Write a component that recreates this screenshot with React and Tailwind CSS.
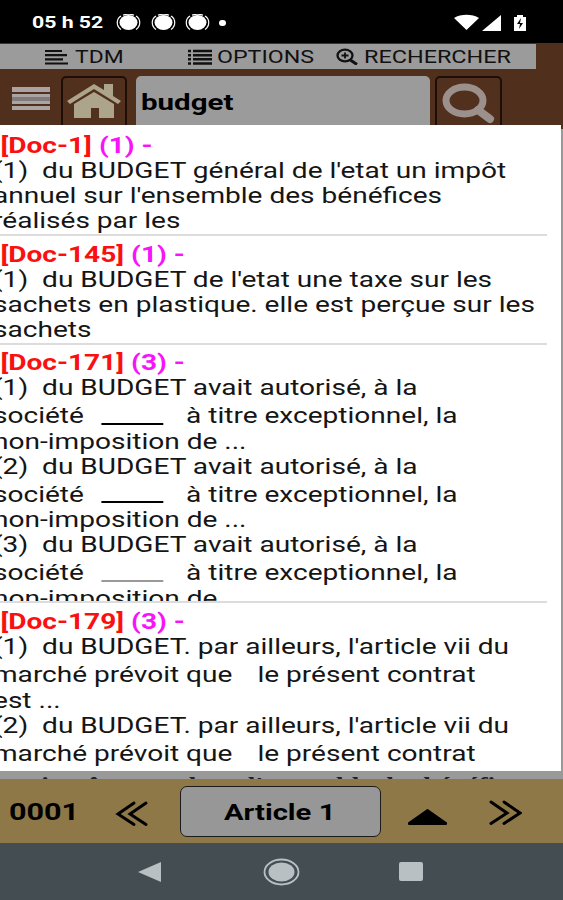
const results = [
  {
    doc: "Doc-1",
    count: 1,
    height: "h-[110.5px] pt-[8px]",
    lines: [["(1)  du BUDGET général de l'etat un impôt"], ["annuel sur l'ensemble des bénéfices"], ["réalisés par les"]],
  },
  {
    doc: "Doc-145",
    count: 1,
    height: "h-[109px] pt-[6.5px]",
    lines: [["(1)  du BUDGET de l'etat une taxe sur les"], ["sachets en plastique. elle est perçue sur les"], ["sachets"]],
  },
  {
    doc: "Doc-171",
    count: 3,
    height: "h-[258.5px] pt-[5.5px]",
    lines: [
      ["(1)  du BUDGET avait autorisé, à la"],
      ["société", "à titre exceptionnel, la", "bg-black"],
      ["non-imposition de ..."],
      ["(2)  du BUDGET avait autorisé, à la"],
      ["société", "à titre exceptionnel, la", "bg-black"],
      ["non-imposition de ..."],
      ["(3)  du BUDGET avait autorisé, à la"],
      ["société", "à titre exceptionnel, la", "bg-[#999]"],
      ["non-imposition de"],
    ],
  },
  {
    doc: "Doc-179",
    count: 3,
    height: "h-[168px] pt-[6px]",
    lines: [
      ["(1)  du BUDGET. par ailleurs, l'article vii du"],
      ["marché prévoit que", "le présent contrat"],
      ["est ..."],
      ["(2)  du BUDGET. par ailleurs, l'article vii du"],
      ["marché prévoit que", "le présent contrat"],
    ],
  },
];

// Wide type: regular Roboto stretched horizontally
function Wide({ className = "", stretch = "scale-x-125", children }) {
  return <span className={`block origin-left whitespace-pre ${stretch} ${className}`}>{children}</span>;
}

function ResultLine({ line }) {
  const [text, rest, rule] = line;
  if (!rest) return <div className="h-[25px] leading-[25px]">{text}</div>;
  return (
    <div className="flex h-[28.6px] items-center leading-[25px] pt-[3px]">
      <span>{text}</span>
      {rule ? (
        <span className={`ml-[13px] mr-[17.5px] mt-[16px] h-[2px] w-[47px] ${rule}`} />
      ) : (
        <span className="w-[19px]" />
      )}
      <span>{rest}</span>
    </div>
  );
}

function Result({ item }) {
  return (
    <div className={`overflow-hidden ${item.height} w-[547px] border-b-[2px] border-[#dcdcdc] last:border-b-0`}>
      <Wide stretch="scale-x-[1.317]" className="w-[415px] text-[21.3px]">
        <div className="h-[25px] pl-[0.4px] font-bold leading-[25px] text-[#fa1010]">
          [{item.doc}] <span className="text-[#f814f8]">({item.count}) -</span>
        </div>
        <div className="-ml-[5.3px]">
          {item.lines.map((line, i) => (
            <ResultLine key={i} line={line} />
          ))}
        </div>
      </Wide>
    </div>
  );
}

function ChatHead() {
  return (
    <svg width="25" height="17" viewBox="0 0 25 17" fill="none" stroke="#fff">
      <ellipse cx="12.5" cy="8.5" rx="9" ry="7.5" fill="#fff" stroke="none" />
      <path d="M5 2C0 5 0 12 5 15.5M20 2c5 3 5 10 0 13.5M7 1.2C10 0 15 0 18 1.2" strokeWidth="1.2" />
    </svg>
  );
}

function StatusBar() {
  return (
    <div className="flex h-[43px] items-center bg-black pl-[32px] pt-[2px] text-white">
      <Wide className="w-[84px] text-[17px] font-bold">05 h 52</Wide>
      <div className="flex items-center gap-[9.5px]">
        <ChatHead />
        <ChatHead />
        <ChatHead />
        <span className="-ml-[0.5px] h-[6px] w-[7px] rounded-full bg-white" />
      </div>
      <svg className="ml-auto mr-[36px]" width="73" height="18" viewBox="0 0 73 18" fill="#fff">
        <path d="M0 4C7-.2 18-.2 25 4L12.500 16Z" />
        <path d="M47 1v16H28Z" />
        <path d="M60 3h3V1h6v2h3v14H60Z" />
        <path d="m67 4-4 6h3l-1 5 4-6h-3Z" fill="#000" />
      </svg>
    </div>
  );
}

function MenuBar() {
  return (
    <div className="mt-px flex h-[25px] w-[536px] items-center bg-[#9b9b9b] text-[18.3px] text-[#111]">
      <svg className="ml-[45px]" width="23" height="16" viewBox="0 0 23 16" stroke="#111" strokeWidth="2.200">
        <path d="M0 2h17M0 6.200h22M0 10.300h18M0 14.500h23" />
      </svg>
      <Wide className="ml-[6.500px] w-[113.500px]">TDM</Wide>
      <svg width="24" height="16" viewBox="0 0 24 16" stroke="#111" strokeWidth="2.600">
        <path d="M0 2h3M0 6.200h3M0 10.300h3M0 14.500h3M5 2h19M5 6.200h19M5 10.300h19M5 14.500h19" />
      </svg>
      <Wide stretch="scale-x-[1.27]" className="ml-[5px] w-[119px]">OPTIONS</Wide>
      <svg width="22" height="17" viewBox="0 0 22 17" fill="none" stroke="#111">
        <ellipse cx="9" cy="7.500" rx="7.500" ry="5.800" strokeWidth="2.300" />
        <path d="m14 11.800 7 4.700" strokeWidth="3" />
        <path d="M5.500 7.500h7M9 4.500v6" strokeWidth="1.800" />
      </svg>
      <Wide stretch="scale-x-[1.28]" className="ml-[6px]">RECHERCHER</Wide>
    </div>
  );
}

function SearchBar() {
  return (
    <div className="flex h-[60px] items-start pl-[12px] pt-[7px]">
      <svg className="mt-[11px]" width="38" height="24" viewBox="0 0 38 24">
        <path d="M0 0h38v5H0zM0 7h38v10H0zM0 19h38v4H0z" fill="#aaa5a3" />
        <path d="M0 10h38v4H0z" fill="#817b7d" />
      </svg>
      <div className="ml-[11px] h-[56px] w-[66px] rounded-[5px] border-2 border-[#1d0f08] bg-[#51301e] pl-[4px] pt-[6px]">
        <svg width="54" height="35" viewBox="0 0 54 35" fill="#ada58b">
          <path d="M27 0 0 17l3 3L27 5l24 15 3-3-8-5V0h-9v6Z" />
          <path d="M27 8 7 20v14h17V24h8v10h15V20Z" />
        </svg>
      </div>
      <div className="ml-[9px] h-[56px] w-[294px] rounded-[5px] bg-[#9b9b9b] pl-[5px] pt-[11px]">
        <Wide stretch="scale-x-[1.31]" className="text-[22.5px] font-bold leading-[31px] text-black">budget</Wide>
      </div>
      <div className="ml-[5px] h-[56px] w-[67px] rounded-[5px] border-2 border-[#1d0f08] bg-[#51301e] pl-[5px] pt-[5px]">
        <svg width="54" height="42" viewBox="0 0 54 42" fill="none" stroke="#9c908c">
          <ellipse cx="22.500" cy="17.500" rx="18.500" ry="13.500" strokeWidth="7" />
          <path d="m36 27 12 9" strokeWidth="8" strokeLinecap="round" />
        </svg>
      </div>
    </div>
  );
}

function BottomBar() {
  return (
    <div className="flex h-[64px] items-center bg-[#8f7848] text-black">
      <Wide stretch="scale-x-[1.3]" className="ml-[9px] w-[106px] pt-[4px] text-[23.5px] font-bold">0001</Wide>
      <svg className="mt-[6px]" width="34" height="28" viewBox="0 0 34 28" fill="none" stroke="#000" strokeWidth="3" strokeLinecap="round">
        <path d="M19 3 3 14l16 10.500M31 3 15 14l16 10.500" />
      </svg>
      <div className="ml-[31px] h-[51px] w-[201px] rounded-[7px] border border-[#1b1b1b] bg-[#979797] pl-[43px] pt-[11px]">
        <Wide stretch="scale-x-[1.34]" className="text-[21.8px] font-bold leading-[29px]">Article 1</Wide>
      </div>
      <svg className="ml-[26px] mt-[12px]" width="41" height="18" viewBox="0 0 41 18">
        <path d="M20.500 2 2 15v1h37v-1Z" stroke="#000" strokeWidth="2" strokeLinejoin="round" />
      </svg>
      <svg className="ml-[40px] mt-[3px]" width="34" height="28" viewBox="0 0 34 28" fill="none" stroke="#000" strokeWidth="3" strokeLinecap="round">
        <path d="m3 3 16 11L3 24.500M16 3l16 11-16 10.500" />
      </svg>
    </div>
  );
}

function SystemNav() {
  return (
    <div className="flex h-[57px] items-center bg-[#444d52] pl-[138px]">
      <svg width="24" height="22" viewBox="0 0 24 22" fill="#b9c0c4">
        <path d="M0 11 23 1v20Z" />
      </svg>
      <svg className="ml-[101px]" width="37" height="28" viewBox="0 0 37 28">
        <ellipse cx="18.500" cy="14" rx="17" ry="12.500" fill="none" stroke="#b9c0c4" strokeWidth="1.800" />
        <ellipse cx="18.500" cy="14" rx="13" ry="9.500" fill="#b9c0c4" />
      </svg>
      <span className="ml-[99px] h-[19px] w-[24px] rounded-[2px] bg-[#b9c0c4]" />
    </div>
  );
}

export default function App() {
  return (
    <div className="relative flex h-[900px] w-[563px] flex-col overflow-hidden bg-[#50301d] font-['Roboto',sans-serif]">
      <StatusBar />
      <MenuBar />
      <SearchBar />
      <div className="flex h-[650px] flex-col justify-end overflow-hidden bg-[#999] font-['Liberation_Serif',serif] text-[22px] font-bold text-[#222]">
        <Wide className="h-[25px] pl-[206px] leading-[23px]">du budget général</Wide>
        <Wide className="-mb-[18px] h-[25px] shrink-0 pl-[3px] leading-[25px]">un impôt annuel sur l'ensemble des bénéfi</Wide>
      </div>
      <BottomBar />
      <SystemNav />

      {/* search results popup */}
      <div className="absolute left-0 top-[125px] h-[646px] w-[561px] overflow-hidden bg-white text-[#151515]">
        {results.map((item) => (
          <Result key={item.doc} item={item} />
        ))}
      </div>
    </div>
  );
}
